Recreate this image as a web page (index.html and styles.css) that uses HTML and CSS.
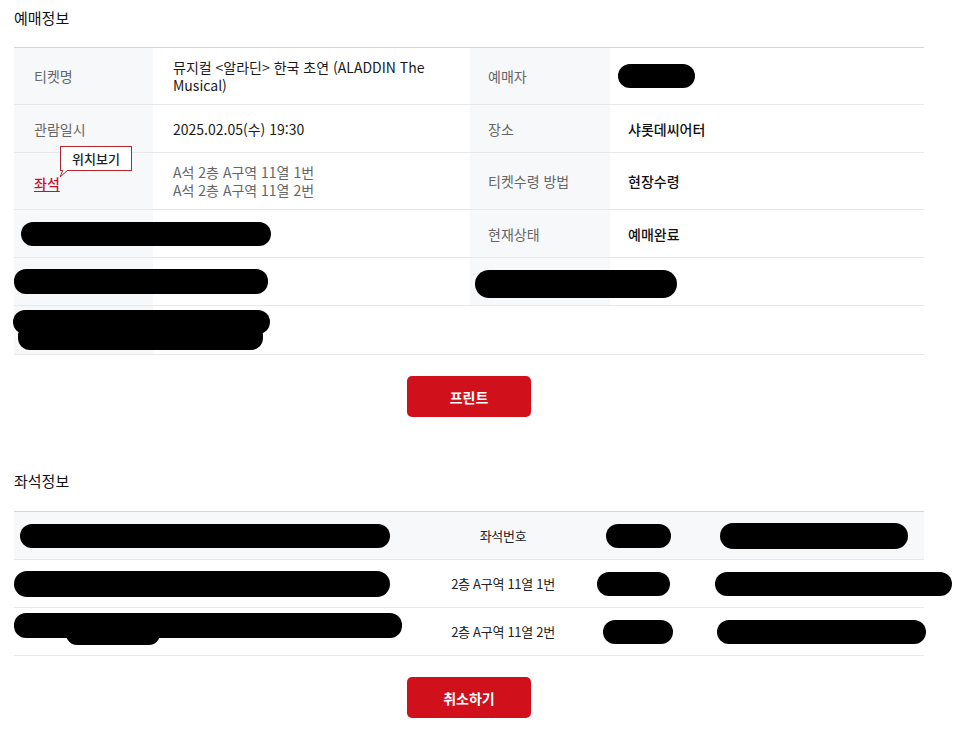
FILE: index.html
```html
<!DOCTYPE html>
<html lang="ko">
<head>
  <meta charset="UTF-8" />
  <meta name="viewport" content="width=device-width, initial-scale=1.0"/>
  <title>예매확인</title>
  <link rel="stylesheet" href="styles.css">
</head>
<body>
  <div class="container">
    <h2 class="section-title">예매정보</h2>

    <table class="info-table">
      <colgroup>
        <col class="c-label">
        <col class="c-value">
        <col class="c-label2">
        <col class="c-value2">
      </colgroup>
      <tbody>
        <tr class="tall">
          <th>티켓명</th>
          <td class="value">뮤지컬 &lt;알라딘&gt; 한국 초연 (ALADDIN The Musical)</td>
          <th>예매자</th>
          <td><span class="redact r-buyer"></span></td>
        </tr>
        <tr>
          <th>관람일시</th>
          <td class="value">2025.02.05(수) 19:30</td>
          <th>장소</th>
          <td class="strong">샤롯데씨어터</td>
        </tr>
        <tr class="tall">
          <th>
            <span class="seat-link">좌석
              <span class="tooltip">위치보기
                <svg class="tooltip-tail" width="12" height="8" viewBox="0 0 12 8">
                  <path d="M3 0 L0 7 L8 0" fill="#fff" stroke="#b3262e" stroke-width="1"/>
                </svg>
              </span>
            </span>
          </th>
          <td class="muted">A석 2층 A구역 11열 1번<br>A석 2층 A구역 11열 2번</td>
          <th>티켓수령 방법</th>
          <td class="strong">현장수령</td>
        </tr>
        <tr>
          <th><span class="redact r-row4"></span></th>
          <td></td>
          <th>현재상태</th>
          <td class="strong">예매완료</td>
        </tr>
        <tr>
          <th><span class="redact r-row5"></span></th>
          <td></td>
          <th><span class="redact r-row5b"></span></th>
          <td></td>
        </tr>
        <tr class="last">
          <th><span class="redact double r-row6"></span></th>
          <td colspan="3"></td>
        </tr>
      </tbody>
    </table>

    <div class="actions">
      <button class="btn-red">프린트</button>
    </div>

    <h2 class="section-title second">좌석정보</h2>

    <table class="seat-table">
      <colgroup>
        <col class="s1">
        <col class="s2">
        <col class="s3">
        <col class="s4">
      </colgroup>
      <thead>
        <tr>
          <th><span class="redact r-h1"></span></th>
          <th class="center">좌석번호</th>
          <th class="center"><span class="redact r-h3"></span></th>
          <th><span class="redact r-h4"></span></th>
        </tr>
      </thead>
      <tbody>
        <tr>
          <td><span class="redact r-a1"></span></td>
          <td class="center">2층 A구역 11열 1번</td>
          <td class="center"><span class="redact r-a3"></span></td>
          <td><span class="redact r-a4"></span></td>
        </tr>
        <tr>
          <td><span class="redact double r-b1"></span></td>
          <td class="center">2층 A구역 11열 2번</td>
          <td class="center"><span class="redact r-b3"></span></td>
          <td><span class="redact r-b4"></span></td>
        </tr>
      </tbody>
    </table>

    <div class="actions">
      <button class="btn-red">취소하기</button>
    </div>
  </div>
</body>
</html>
```

FILE: styles.css
```css
body {
  margin: 0;
  font-family: "Noto Sans CJK KR", "Noto Sans", sans-serif;
  font-size: 14px;
  color: #222;
  background: #fff;
}

.container {
  width: 910px;
  margin-left: 14px;
}

.section-title {
  margin: 7px 0 18px;
  font-size: 15px;
  font-weight: normal;
  line-height: 22px;
  color: #111;
}

.section-title.second {
  margin-top: 53px;
  margin-bottom: 19px;
}

table {
  width: 100%;
  border-collapse: collapse;
  table-layout: fixed;
}

/* 예매정보 */
.info-table {
  border-top: 1px solid #d4d4d4;
}

.c-label { width: 139px; }
.c-value { width: 317px; }
.c-label2 { width: 140px; }
.c-value2 { width: 314px; }

.info-table th,
.info-table td {
  height: 47px;
  padding: 0 20px;
  text-align: left;
  line-height: 18px;
  border-bottom: 1px solid #e8e8e8;
  white-space: nowrap;
}

.info-table tr.tall th,
.info-table tr.tall td {
  height: 56px;
}

.info-table tr.last th,
.info-table tr.last td {
  height: 48px;
}

.info-table td:nth-child(2) {
  white-space: normal;
}

.info-table th {
  background-color: #f7f8fa;
  font-weight: normal;
  color: #666;
}

.info-table th:nth-child(3) {
  padding-left: 18px;
}

.info-table td:nth-child(4) {
  padding-left: 18px;
}

.value {
  color: #1a1a1a;
}

.strong {
  font-weight: 500;
  color: #111;
}

.muted {
  color: #666;
}

.seat-link {
  position: relative;
  color: #c8102e;
  font-weight: 500;
  text-decoration: underline;
  text-underline-offset: 2px;
  top: 2px;
}

.tooltip {
  position: absolute;
  left: 26px;
  top: -27px;
  width: 70px;
  height: 23px;
  line-height: 23px;
  text-align: center;
  background: #fff;
  border: 1px solid #b3262e;
  color: #222;
  font-size: 13px;
  font-weight: 500;
  text-decoration: none;
  display: inline-block;
}

.tooltip-tail {
  position: absolute;
  left: -1px;
  top: 23px;
  display: block;
}

/* 버튼 */
.actions {
  display: flex;
  justify-content: center;
  margin-top: 21px;
}

.btn-red {
  width: 124px;
  height: 41px;
  border: none;
  border-radius: 5px;
  background-color: #d0111b;
  color: #fff;
  font-family: inherit;
  font-size: 14px;
  font-weight: bold;
  cursor: pointer;
}

/* 좌석정보 */
.seat-table {
  border-top: 1px solid #d4d4d4;
}

.s1 { width: 406px; }
.s2 { width: 166px; }
.s3 { width: 104px; }
.s4 { width: 234px; }

.seat-table th,
.seat-table td {
  height: 47px;
  padding: 0 6px;
  text-align: left;
  font-size: 13px;
  font-weight: normal;
  letter-spacing: -0.3px;
  color: #222;
  border-bottom: 1px solid #e8e8e8;
  white-space: nowrap;
}

.seat-table thead th {
  background-color: #f7f8fa;
}

.seat-table .center {
  text-align: center;
}

/* 가림 처리 */
.redact {
  display: inline-block;
  position: relative;
  vertical-align: middle;
  height: 24px;
  background: #000;
  border-radius: 12px;
}

.redact.double::after {
  content: "";
  position: absolute;
  background: #000;
  border-radius: 12px;
}

.r-buyer { width: 77px; margin-left: -10px; }
.r-row4 { width: 250px; margin-left: -13px; }
.r-row5 { width: 254px; height: 25px; margin-left: -20px; }
.r-row5b { width: 202px; height: 28px; margin-left: -13px; top: 2px; border-radius: 14px; }
.r-row6 { width: 257px; margin-left: -21px; top: -8px; }
.r-row6::after { left: 5px; top: 14px; width: 245px; height: 26px; }

.r-h1 { width: 370px; }
.r-h3 { width: 65px; }
.r-h4 { width: 188px; height: 26px; margin-left: 24px; border-radius: 13px; }
.r-a1 { width: 376px; height: 26px; margin-left: -6px; border-radius: 13px; }
.r-a3 { width: 73px; margin-left: -10px; }
.r-a4 { width: 237px; margin-left: 19px; }
.r-b1 { width: 388px; height: 25px; margin-left: -6px; top: -6px; }
.r-b1::after { left: 52px; top: 10px; width: 94px; height: 22px; }
.r-b3 { width: 70px; }
.r-b4 { width: 209px; margin-left: 21px; }
```
